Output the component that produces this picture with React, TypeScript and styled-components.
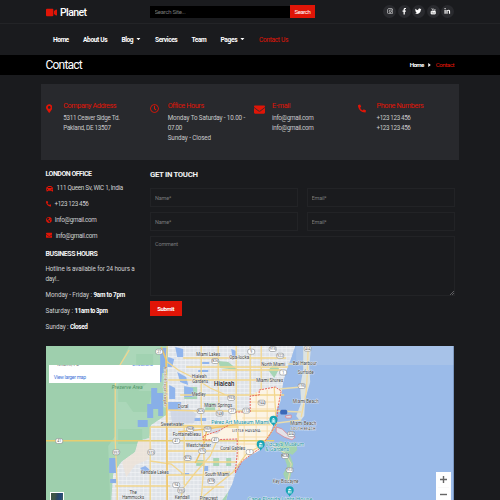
import React from "react";
import styled, { createGlobalStyle } from "styled-components";
import {
  FaVideo, FaInstagram, FaFacebookF, FaTwitter, FaLinkedinIn, FaMapMarkerAlt,
  FaRegClock, FaEnvelope, FaPhoneAlt, FaCar, FaGlobeAmericas,
} from "react-icons/fa";

const red = "#e01507";

const GlobalStyle = createGlobalStyle`
  * { box-sizing: border-box; }
  html, body { margin: 0; height: 500px; overflow: hidden; background: #1a1b1e; }
  body { font-family: Roboto, "Liberation Sans", sans-serif; color: #c9cacb; }
  svg { display: block; }
`;

const Page = styled.div`
  width: 500px;
  height: 500px;
  overflow: hidden;
  background: #1a1b1e;
`;

const Text = styled.span<{ $size?: number; $track?: number; $weight?: number; $color?: string }>`
  display: inline-block;
  white-space: pre;
  font-size: ${(p) => p.$size ?? 6.3}px;
  letter-spacing: ${(p) => p.$track ?? 0}em;
  font-weight: ${(p) => p.$weight ?? 400};
  color: ${(p) => p.$color ?? "inherit"};
`;

/* Header */
const TopBar = styled.header`
  display: flex;
  align-items: center;
  height: 24px;
  padding: 0 46px 0 45.5px;
  border-bottom: 1px solid #232427;
`;
const Brand = styled.a`
  display: flex;
  align-items: center;
  gap: 3.5px;
  width: 104.5px;
  padding-top: 1px;
  svg { width: 11px; height: 11px; color: ${red}; }
`;
const SearchForm = styled.form`
  display: flex;
  align-items: center;
  width: 165px;
`;
const SearchInput = styled.input`
  width: 140px;
  height: 12px;
  padding: 0 4.5px;
  border: 0;
  background: #000;
  color: #fff;
  font: 6px Roboto, sans-serif;
  letter-spacing: -0.046em;
  &::placeholder { color: #77797b; }
`;
const SearchButton = styled.button`
  display: flex;
  justify-content: center;
  align-items: center;
  width: 25px;
  height: 13.5px;
  padding: 0;
  border: 0;
  background: ${red};
  font-family: inherit;
`;
const Socials = styled.nav`
  display: flex;
  gap: 1.4px;
  margin-left: auto;
`;
const SocialLink = styled.a`
  display: grid;
  place-items: center;
  width: 13px;
  height: 13px;
  border-radius: 50%;
  background: #292a2e;
  color: #fff;
  svg { width: 6.5px; height: 6.5px; }
`;
const MainNav = styled.nav`
  display: flex;
  align-items: center;
  height: 31px;
  padding-left: 53px;
`;
const NavItem = styled.a<{ $width: number }>`
  display: flex;
  align-items: center;
  gap: 3px;
  width: ${(p) => p.$width}px;
  color: #fff;
`;
const Caret = styled.i`
  width: 4.4px;
  height: 2.4px;
  margin-top: -1px;
  background: #fff;
  clip-path: polygon(0 0, 100% 0, 50% 100%);
`;

/* Title banner */
const Banner = styled.section`
  display: flex;
  align-items: center;
  justify-content: space-between;
  height: 20px;
  padding: 0 46px 0 45.5px;
  background: #000;
  color: #fff;
`;
const Crumbs = styled.div`
  display: flex;
  align-items: center;
`;
const CrumbArrow = styled.i`
  width: 2.5px;
  height: 4.2px;
  margin: 0 5px 0 4.5px;
  background: #fff;
  clip-path: polygon(0 0, 100% 50%, 0 100%);
`;

/* Contact summary */
const InfoPanel = styled.section`
  display: grid;
  grid-template-columns: repeat(4, 104.4px);
  width: 418px;
  height: 76px;
  margin: 9px 0 0 41px;
  padding: 17px 0 0 4.5px;
  background: #28292d;
`;
const InfoCell = styled.article`
  display: grid;
  grid-template-columns: 17.8px 1fr;
  padding-top: 0.5px;
`;
const InfoIcon = styled.span<{ $w?: number; $shift?: number }>`
  padding-top: 2px;
  color: ${red};
  svg { width: ${(p) => p.$w ?? 9}px; height: ${(p) => (p.$w && p.$w > 10 ? 11 : 9)}px; margin-left: ${(p) => p.$shift ?? 0}px; }
`;
const InfoLines = styled.div`
  display: grid;
  grid-template-rows: 11px;
  grid-auto-rows: 10px;
  align-items: center;
  justify-items: start;
`;
const InfoTitle = styled.div`
  display: flex;
  align-items: center;
  height: 11px;
  padding-bottom: 3px;
`;

/* Body columns */
const Columns = styled.main`
  display: grid;
  grid-template-columns: 104.5px 304.5px;
  height: 186px;
  padding: 8px 0 0 45.5px;
`;
const Sidebar = styled.aside`
  display: flex;
  flex-direction: column;
`;
const SideRow = styled.div<{ $h: number }>`
  display: flex;
  align-items: center;
  height: ${(p) => p.$h}px;
  color: #d0d1d2;
`;
const SideIcon = styled.span<{ $w: number; $box: number }>`
  width: ${(p) => p.$box}px;
  color: ${red};
  svg { width: ${(p) => p.$w}px; height: ${(p) => p.$w}px; }
`;
const FormArea = styled.form`
  display: flex;
  flex-direction: column;
`;
const FormTitle = styled.div`
  display: flex;
  align-items: center;
  height: 20px;
  padding-bottom: 7px;
  color: #f2f2f2;
`;
const FieldRow = styled.div`
  display: grid;
  grid-template-columns: 148px 148px;
  justify-content: space-between;
  margin-bottom: 5px;
`;
const Field = styled.input`
  height: 19px;
  padding: 0 4px;
  border: 1px solid #222326;
  background: transparent;
  color: #fff;
  font: 5.5px Roboto, sans-serif;
  letter-spacing: -0.027em;
  &::placeholder { color: #77797b; }
`;
const CommentWrap = styled.div`
  position: relative;
  height: 59.5px;
  margin-bottom: 5.5px;
`;
const CommentField = styled.textarea`
  display: block;
  width: 100%;
  height: 100%;
  padding: 3.5px 4px;
  border: 1px solid #222326;
  background: transparent;
  color: #fff;
  font: 5.5px Roboto, sans-serif;
  letter-spacing: -0.029em;
  resize: none;
  &::placeholder { color: #77797b; }
`;
const Grip = styled.svg`
  position: absolute;
  right: 1px;
  bottom: 1px;
`;
const Submit = styled.button`
  display: flex;
  align-items: center;
  justify-content: center;
  width: 31.5px;
  height: 14.5px;
  padding: 0;
  border: 0;
  background: ${red};
  color: #fff;
  font-family: inherit;
`;

/* Map */
const MapFrame = styled.section`
  position: relative;
  width: 408.3px;
  height: 154px;
  margin-left: 45.8px;
  overflow: hidden;
`;
const MapCard = styled.div`
  position: absolute;
  left: 3.5px;
  top: 19px;
  width: 110.7px;
  height: 18px;
  overflow: hidden;
  background: #fff;
`;
const CardHead = styled.div`
  display: flex;
  justify-content: space-between;
  height: 7px;
  margin-top: -3px;
  padding: 0 7px 0 8px;
  line-height: 5px;
`;
const CardLink = styled.a`
  display: flex;
  align-items: center;
  height: 8px;
  padding-left: 4.5px;
  margin-top: 4px;
`;
const ZoomControl = styled.div`
  position: absolute;
  left: 390px;
  top: 126px;
  display: grid;
  grid-template-rows: 15px 15px;
  width: 15px;
  background: #fff;
`;
const Thumb = styled.div`
  position: absolute;
  left: 4px;
  top: 145.5px;
  width: 14.5px;
  height: 14.5px;
  border: 1px solid #fff;
  background: linear-gradient(100deg, #3f5547 0 30%, #2a4560 50%, #24497c 75%, #50684c);
`;

const nav: { label: string; width: number; track: number; menu?: boolean; active?: boolean }[] = [
  { label: "Home", width: 30, track: -0.074 },
  { label: "About Us", width: 38.5, track: -0.055 },
  { label: "Blog", width: 33.5, track: -0.066, menu: true },
  { label: "Services", width: 36.5, track: -0.062 },
  { label: "Team", width: 29, track: -0.072 },
  { label: "Pages", width: 38.5, track: -0.054, menu: true },
  { label: "Contact Us", width: 40, track: -0.051, active: true },
];

const YoutubeIcon = () => (
  <svg viewBox="0 0 24 24" fill="none" stroke="currentColor">
    <rect x="3" y="11" width="18" height="12" rx="3" fill="currentColor" />
    <path d="M6 1l3 5v4M12 1L9 6M13 5v4M16 5v4h3V4" strokeWidth="2" />
    <path d="M6 15h4M8 15v6M12 16v5M16 15v6" stroke="#292a2e" strokeWidth="1.3" />
  </svg>
);

const info = [
  { icon: <FaMapMarkerAlt />, w: 6.5, shift: 0, title: "Company Address", track: -0.053,
    lines: [["5311 Ceaver Sidge Td.", -0.046], ["Pakland, DE 13507", -0.045]] },
  { icon: <FaRegClock />, w: 9, shift: -0.3, title: "Office Hours", track: -0.05,
    lines: [["Monday To Saturday - 10.00 -", -0.022], ["07.00", -0.05], ["Sunday - Closed", -0.016]] },
  { icon: <FaEnvelope />, w: 11, shift: -0.5, title: "E-mail", track: -0.035,
    lines: [["info@gmail.com", -0.052], ["info@gmail.com", -0.052]] },
  { icon: <FaPhoneAlt />, w: 8, shift: -0.5, title: "Phone Numbers", track: -0.049,
    lines: [["+123 123 456", -0.06], ["+123 123 456", -0.06]] },
];

const contacts = [
  { icon: <FaCar />, w: 7.5, box: 11, label: "111 Queen Sv, WIC 1, India", track: -0.046 },
  { icon: <FaPhoneAlt />, w: 5.5, box: 9, label: "+123 123 456", track: -0.06 },
  { icon: <FaGlobeAmericas />, w: 6, box: 9.3, label: "Info@gmail.com", track: -0.052 },
  { icon: <FaEnvelope />, w: 6.7, box: 10.3, label: "info@gmail.com", track: -0.052 },
];

const hours = [
  { day: "Monday - Friday :", dt: -0.009, time: "9am to 7pm", tt: -0.036 },
  { day: "Saturday :", dt: -0.004, time: "11am to 3pm", tt: -0.064 },
  { day: "Sunday :", dt: -0.014, time: "Closed", tt: -0.054 },
];

/* text, centre x, baseline y, width */
const places: [string, number, number, number][] = [
  ["Miami Lakes", 208, 355.6, 24], ["Opa-locka", 239, 359, 20], ["North Miami", 273, 366.3, 24],
  ["Bal Harbour", 304.5, 365.3, 24], ["Surfside", 305.5, 373.6, 16], ["Miami Shores", 269.5, 382.3, 27],
  ["Hialeah", 199, 378.5, 15], ["Gardens", 200, 383.3, 16], ["Medley", 198.5, 395.8, 14],
  ["Miami Springs", 218, 406.8, 28], ["Doral", 183, 408, 10.5], ["Miami Beach", 305.5, 403, 26],
  ["Sweetwater", 172, 425.8, 23], ["Fontainebleau", 186.5, 436, 28], ["Westchester", 198.3, 446.8, 25],
  ["Coral Gables", 232.5, 450, 25], ["Kendale Lakes", 154.5, 474.2, 28], ["South Miami", 217, 475.8, 24.5],
  ["Kendall", 182, 498.8, 15], ["Pinecrest", 208.5, 499.8, 18], ["The", 133, 494, 7.5],
  ["Hammocks", 133, 498.8, 22], ["Miami Beach", 303, 425.4, 26], ["Key Biscayne", 285.5, 482.7, 26],
];

/* number, centre x, centre y */
const shields: [string, number, number][] = [
  ["27", 159, 351.7], ["41", 59, 441], ["997", 116, 452.3], ["973", 151, 452.3], ["826", 215, 361],
  ["953", 231, 398], ["826", 200.5, 411], ["948", 219.5, 413.5], ["27", 232, 411], ["968", 190, 429],
  ["959", 207.5, 429], ["41", 176, 441], ["41", 215, 440], ["976", 202, 451], ["874", 187.5, 458],
  ["878", 211, 481], ["94", 176, 485], ["990", 181, 490.3], ["9", 251, 351.7], ["915", 272.5, 349],
  ["922", 280, 355.7], ["1", 283, 372.5], ["944", 261.5, 402.7], ["112", 246, 410.7], ["195", 301.5, 386],
  ["AIA", 307.5, 348.7], ["1", 249.5, 452], ["AIA", 291, 434], ["RCM", 285, 456], ["913", 289.5, 470],
];

const Pin = ({ x, y }: { x: number; y: number }) => (
  <g transform={`translate(${x} ${y})`}>
    <path d="M0 6C-.7 3.5-4 2.6-4-.7a4 4 0 0 1 8 0C4 2.6.7 3.5 0 6Z" fill="#16a5b5" />
    <path d="M-2-1 0-2.6 2-1ZM-1.7-.5h.8v2h-.8zM-.4-.5h.8v2h-.8zM.9-.5h.8v2H.9zM-2 1.7h4v.6h-4z" fill="#fff" />
  </g>
);

const MiamiMap = () => (
  <svg width="408.3" height="154" viewBox="45.8 346 408.3 154" fontFamily="Roboto, sans-serif">
    <defs>
      <pattern id="streets" width="8.4" height="8" patternUnits="userSpaceOnUse">
        <path d="M0 .5H8.4M.5 0V8M0 4.5H8.4M4.7 0V8" stroke="#f5f6f8" strokeWidth=".55" />
      </pattern>
      <clipPath id="land">
        <path d="M168 346H295L291 358 286 371 283 382 280 402 275 412 274 422 270 433 260 450 249 456 238 465 235 474 232 484 228 492 226 500H111L113 474 121 462 135 452 138 441 149 438 151 425 166 415Z" />
      </clipPath>
    </defs>
    <rect x="45" y="346" width="410" height="154" fill="#9bbbe9" />
    <rect x="296" y="346" width="159" height="19" fill="#a7c2e8" />
    <path d="M45 346H170V500H45Z" fill="#abd7b9" />
    <path d="M45 346H129L118 368 115 383V436L108 446 110 500H45Z" fill="#9ecfad" />
    <path d="M129 374l18-3v12l-9 8h14l-5 21h-14l-7-10h-8v-18zM118 429h24v15h-24z" fill="#a1d2b0" />
    <path d="M136 354h17v11h-17z" fill="#a1d2b1" />
    <g clipPath="url(#land)">
      <rect x="105" y="346" width="192" height="154" fill="#dfe3e8" />
      <rect x="105" y="346" width="192" height="154" fill="url(#streets)" />
      <path d="M132 443l17-4 3 9-5 12-12 5-9 12-4-14z" fill="#eee2d7" opacity=".8" />
      <path d="M250 396L260 390 275 387 282 392 276 425 262 448 237 468 237 439 203 440 203 433 229 425 232 412H250Z" fill="#fcf4e5" />
      <path d="M250 402H274M250 409H274M242 418H274M236 425H272M232 431H270M238 437H268M238 444H263M256 392V447M267 390V437M244 413V456M238 425V460" stroke="#f7ddab" strokeWidth="1" />
      <path d="M218 361l10 1 10 8-18-2zM184 387h13v12h-13zM205 403h10v8h-10zM213 458h6v8h-6zM226 458h5v8h-5zM196 460h8v6h-8zM268 370l7-7 4 6-5 9zM228 492l4-7 8-5v20H222z" fill="#a7d5b5" />
      <path d="M175 347l8 2v8h-6zM168 357l6 2-2 8h-5zM177 372l9 5 2 8-8-3zM184 386l9 2v9h-9zM169 385l6 3v11h-6zM168 402h13v8h-13zM202 362h7v2h-7zM198 370h10v2h-10zM194 418h12v3h-12zM203 466h5v5h-5zM181 473h8v2h-8zM231 349l5 2v5h-4zM140 468l5-2 5 4-7 3z" fill="#91b5ed" />
      <path d="M170 410l18-2 8 6-2 9-22 1zM206 432l21-7-10 9z" fill="#c7d0e2" opacity=".7" />
    </g>
    <path d="M160 348h7v25h-5l-1 9h-8v-10l7-4zM151 388h6v5h6v16h-10v9h-6v-14h4zM137.5 420h10v7h-10zM158 402h5v14h-5zM109 458h7v15h-7zM110 479h6v4h-6z" fill="#88afe7" />
    <g fill="none" stroke="#f2d68d" strokeWidth="1.3">
      <path d="M45 440.7H274" stroke="#e7ce70" strokeWidth="1.4" />
      <path d="M129 350L118 368 115 385V440L117 486V500M115 486H170M167 346L166 361 167 414V500M166 361L178 370 194 378 210 388 228 396M201 346V420L203 440 204 462 201 500M218 346V382L219 413M236 346V412L238 440M261 346V390M250 346V396M183 358H230L253 358H286M186 367H288M222 370H282M168 380H218L279 380M180 395H284M168 410L200 411 232 411H281M167 425L203 426 270 424M150 427H238M167 451H236M150 427V500M167 462H236M184 425V485M217 440L210 456 194 474 183 488 180 500M167 475H200L230 472M203 487H224M274 387L276 425 262 445 246 454 233 472 212 489 199 500M150 461L171 464 183 474" />
    </g>
    <path d="M161 347L166 360 167 500M178 432L207 429 238 424M207 428L203 447 195 463" fill="none" stroke="#eec56b" strokeWidth="1.5" />
    <path d="M303 346H311L309 366 310 382 305 399 304 416 300 421 296 416 301 403 300 386 303 370Z" fill="#dce3e2" />
    <path d="M308 346L307 376 306 392 301 417" fill="none" stroke="#f3db9f" strokeWidth="1.4" />
    <path d="M279 389L301 387M277 411L301 412M277 423L301 420M288 364L304 364" fill="none" stroke="#e8dcae" strokeWidth="1.5" />
    <path d="M276 427l6 2 5 5 8 3-3 3-8-3-8-5zM285 416l6-1v3h-5z" fill="#e3e1e8" stroke="#df7c85" strokeWidth=".7" />
    <path d="M280 441l8 3 8-2 1 8-5 5-3-2 4 11-3 14-3 5-4-9 4-8-4-12-7-7z" fill="#a4d3ae" />
    <path d="M267 443L285 453 291 464 288 480" fill="none" stroke="#e8dcae" />
    <path d="M232 412H250V396L259 395V390L275 387 281 391 278 406 276 424 270 434 260 448 242 461 235 473 237 454V439L203 440V436L218 431 229 425" fill="none" stroke="#e7655e" strokeWidth="1" strokeDasharray="2 1" />
    {shields.map(([n, x, y], i) => (
      <g key={i}>
        <rect x={x - 3.5} y={y - 2.5} width="7" height="5" rx="1.8" fill="#fff" stroke="#85888b" strokeWidth=".6" />
        <text x={x} y={y + 1.25} fontSize="3.5" fill="#55585b" textAnchor="middle">{n}</text>
      </g>
    ))}
    <rect x="280" y="409.8" width="7" height="4.7" rx="1.5" fill="#3b68b8" />
    <g fontSize="5.2" fill="#3a3d41" stroke="#f6f7f9" strokeWidth=".7" paintOrder="stroke" textAnchor="middle">
      {places.map(([t, x, y, w], i) => (
        <text key={i} x={x} y={y} textLength={w} lengthAdjust="spacingAndGlyphs">{t}</text>
      ))}
      <text x="224" y="386.2" fontSize="6.6" fontWeight="500" fill="#202124" textLength="20.5" lengthAdjust="spacingAndGlyphs">Hialeah</text>
      <text x="246" y="432.5" fontSize="3.9" textLength="28">LITTLE HAVANA</text>
      <text x="303" y="429.8" fontSize="3.6" textLength="25">SOUTH BEACH</text>
      <g fill="#14909d" fontSize="5.6">
        <text x="240" y="423.6" textLength="58" lengthAdjust="spacingAndGlyphs">Pérez Art Museum Miami</text>
        <text x="284.5" y="445.6" textLength="39" lengthAdjust="spacingAndGlyphs">Vizcaya Museum</text>
        <text x="277" y="450.8" textLength="24" lengthAdjust="spacingAndGlyphs">&amp; Gardens</text>
        <text x="280" y="501.5" textLength="65" lengthAdjust="spacingAndGlyphs">Cape Florida Light House</text>
      </g>
      <text x="127" y="388.7" fontStyle="italic" fill="#4f9266" stroke="none" textLength="31">Preserve Area</text>
      <text transform="translate(164 387) rotate(90)" fontSize="4.2" fill="#8d6745" textLength="40">Ronald Reagan Turnpike</text>
    </g>
    <Pin x={273.3} y={420.5} />
    <Pin x={260.5} y={445} />
    <Pin x={289.5} y={491} />
    <rect x="453.3" y="346" width="1" height="154" fill="#587298" />
  </svg>
);

export default function App() {
  return (
    <>
      <GlobalStyle />
      <Page>
        <TopBar>
          <Brand>
            <FaVideo />
            <Text $size={10.5} $track={-0.056} $weight={500} $color="#fff">Planet</Text>
          </Brand>
          <SearchForm>
            <SearchInput placeholder="Search Site..." />
            <SearchButton type="button">
              <Text $size={6} $track={-0.066} $color="#fff">Search</Text>
            </SearchButton>
          </SearchForm>
          <Socials>
            <SocialLink><FaInstagram /></SocialLink>
            <SocialLink><FaFacebookF /></SocialLink>
            <SocialLink><FaTwitter /></SocialLink>
            <SocialLink><YoutubeIcon /></SocialLink>
            <SocialLink><FaLinkedinIn /></SocialLink>
          </Socials>
        </TopBar>
        <MainNav>
          {nav.map((n) => (
            <NavItem key={n.label} $width={n.width}>
              <Text $size={6.6} $track={n.track} $weight={n.active ? 400 : 700} $color={n.active ? red : "#fff"}>{n.label}</Text>
              {n.menu && <Caret />}
            </NavItem>
          ))}
        </MainNav>
        <Banner>
          <Text $size={12} $track={-0.066} $weight={400}>Contact</Text>
          <Crumbs>
            <Text $size={6.2} $track={-0.105} $weight={700}>Home</Text>
            <CrumbArrow />
            <Text $size={6.2} $track={-0.078} $color={red}>Contact</Text>
          </Crumbs>
        </Banner>

        <InfoPanel>
          {info.map((c) => (
            <InfoCell key={c.title}>
              <InfoIcon $w={c.w} $shift={c.shift}>{c.icon}</InfoIcon>
              <InfoLines>
                <InfoTitle><Text $size={7.2} $track={c.track} $color={red}>{c.title}</Text></InfoTitle>
                {c.lines.map(([t, track], i) => (
                  <Text key={i} $track={track as number}>{t}</Text>
                ))}
              </InfoLines>
            </InfoCell>
          ))}
        </InfoPanel>

        <Columns>
          <Sidebar>
            <SideRow $h={12.5}><Text $size={7} $track={-0.071} $weight={700} $color="#f2f2f2">LONDON OFFICE</Text></SideRow>
            {contacts.map((c, i) => (
              <SideRow key={i} $h={15.8}>
                <SideIcon $w={c.w} $box={c.box}>{c.icon}</SideIcon>
                <Text $track={c.track}>{c.label}</Text>
              </SideRow>
            ))}
            <SideRow $h={20.6}><Text $size={7} $track={-0.06} $weight={700} $color="#f2f2f2">BUSINESS HOURS</Text></SideRow>
            <SideRow $h={10}><Text $track={-0.019}>Hotline is available for 24 hours a</Text></SideRow>
            <SideRow $h={10}><Text $track={-0.03}>day!..</Text></SideRow>
            <SideRow $h={3} />
            {hours.map((h) => (
              <SideRow key={h.day} $h={15.7}>
                <Text $track={h.dt}>{h.day} </Text>
                <Text $track={h.tt} $weight={700} $color="#fff">{h.time}</Text>
              </SideRow>
            ))}
          </Sidebar>
          <FormArea>
            <FormTitle><Text $size={7.8} $track={-0.044} $weight={700}>GET IN TOUCH</Text></FormTitle>
            <FieldRow><Field placeholder="Name*" /><Field placeholder="Email*" /></FieldRow>
            <FieldRow><Field placeholder="Name*" /><Field placeholder="Email*" /></FieldRow>
            <CommentWrap>
              <CommentField placeholder="Comment" />
              <Grip width="4" height="4" viewBox="0 0 4 4" stroke="#8b8c8d" strokeWidth=".6">
                <path d="M0 4 4 0M2 4 4 2" />
              </Grip>
            </CommentWrap>
            <Submit type="button"><Text $size={6} $track={-0.062} $weight={700}>Submit</Text></Submit>
          </FormArea>
        </Columns>

        <MapFrame>
          <MiamiMap />
          <MapCard>
            <CardHead>
              <Text $size={5} $color="#777">Miami, FL</Text>
              <Text $size={4.6} $color="#4c7fdc">Directions</Text>
            </CardHead>
            <CardLink><Text $size={5.1} $track={-0.06} $color="#3f75d8">View larger map</Text></CardLink>
          </MapCard>
          <Thumb />
          <ZoomControl>
            <svg width="15" height="15" viewBox="0 0 15 15" stroke="#666" strokeWidth="1.4"><path d="M4 7.5H11M7.5 4V11" /></svg>
            <svg width="15" height="15" viewBox="0 0 15 15" stroke="#666" strokeWidth="1.4"><path d="M2 .3H13" stroke="#eee" strokeWidth=".5" /><path d="M4 7.5H11" /></svg>
          </ZoomControl>
        </MapFrame>
      </Page>
    </>
  );
}
